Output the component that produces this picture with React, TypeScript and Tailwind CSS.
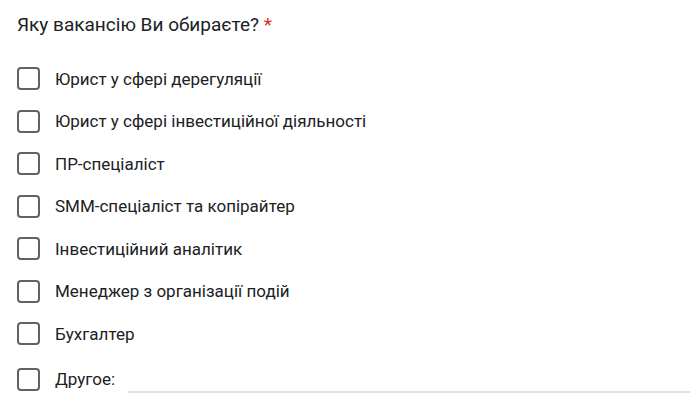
import React from 'react';

const options = [
  'Юрист у сфері дерегуляції',
  'Юрист у сфері інвестиційної діяльності',
  'ПР-спеціаліст',
  'SMM-спеціаліст та копірайтер',
  'Інвестиційний аналітик',
  'Менеджер з організації подій',
  'Бухгалтер',
];

// Checkbox square, unchecked
const Box = () => (
  <span className="w-[23px] h-[23px] shrink-0 rounded-[4px] border-2 border-[#5f6368] bg-white" />
);

export default function App() {
  return (
    <div className="w-[690px] h-[411px] bg-white overflow-hidden font-['Roboto',sans-serif] text-[#202124]">
      <div className="pl-[17px] pt-[13px]">
        <div className="text-[19px] leading-6">
          Яку вакансію Ви обираєте? <span className="text-[#d93025]">*</span>
        </div>

        <div className="mt-[30px] flex flex-col gap-[19.5px]">
          {options.map(label => (
            <label key={label} className="flex items-center h-[23px]">
              <Box />
              <span className="ml-[15px] text-[17px] leading-5">{label}</span>
            </label>
          ))}
          <label className="mt-[3px] flex items-center h-[23px]">
            <Box />
            <span className="ml-[15px] text-[17px] leading-5">Другое:</span>
            <span className="ml-[13px] flex-1 self-end translate-y-[2px] h-[2px] bg-[#e0e0e0]" />
          </label>
        </div>
      </div>
    </div>
  );
}
